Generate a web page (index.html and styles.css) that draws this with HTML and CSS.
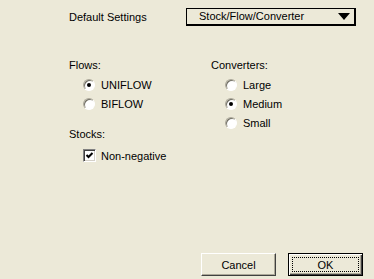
FILE: index.html
```html
<!DOCTYPE html>
<html>
  <head>
    <title>Default Settings</title>
    <link rel="stylesheet" href="styles.css">
  </head>
  <body>
    <div class="dialog">
      <div class="top">
        <span class="top-label">Default Settings</span>
        <div class="select">
          <span class="select-text">Stock/Flow/Converter</span>
          <span class="arrow"></span>
        </div>
      </div>

      <div class="groups">
        <div class="col">
          <div class="heading">Flows:</div>
          <div class="option"><span class="radio checked"></span>UNIFLOW</div>
          <div class="option"><span class="radio"></span>BIFLOW</div>

          <div class="heading stocks">Stocks:</div>
          <div class="option check-row">
            <span class="check">
              <svg width="9" height="9" viewBox="0 0 9 9">
                <polyline points="1.5,4 3.5,6 7.5,2" fill="none" stroke="#000" stroke-width="2"/>
              </svg>
            </span>Non-negative
          </div>
        </div>

        <div class="col">
          <div class="heading">Converters:</div>
          <div class="option"><span class="radio"></span>Large</div>
          <div class="option"><span class="radio checked"></span>Medium</div>
          <div class="option"><span class="radio"></span>Small</div>
        </div>
      </div>

      <div class="buttons">
        <button class="btn">Cancel</button>
        <button class="btn default"><span class="focus">OK</span></button>
      </div>
    </div>
  </body>
</html>
```

FILE: styles.css
```css
* {
  box-sizing: border-box;
}

html, body {
  margin: 0;
  padding: 0;
}

body {
  background: #ece9d8;
  font-family: "Liberation Sans", Arial, sans-serif;
  font-size: 11px;
  color: #000;
}

.dialog {
  height: 279px;
  display: flex;
  flex-direction: column;
}

/* top row */
.top {
  display: flex;
  align-items: center;
  padding: 8px 0 0 69px;
}

.top-label {
  width: 117px;
  line-height: 18px;
}

.select {
  width: 170px;
  height: 18px;
  border: 1px solid #000;
  border-right-width: 2px;
  border-bottom-width: 2px;
  display: flex;
  align-items: center;
  padding: 0 4px 0 12px;
}

.select-text {
  flex: 1;
  line-height: 15px;
}

.arrow {
  width: 0;
  height: 0;
  border-left: 6px solid transparent;
  border-right: 6px solid transparent;
  border-top: 7px solid #000;
}

/* option groups */
.groups {
  display: grid;
  grid-template-columns: 142px 1fr;
  padding-left: 69px;
  margin-top: 30px;
}

.heading {
  line-height: 19px;
}

.heading.stocks {
  margin-top: 12px;
}

.option {
  display: flex;
  align-items: center;
  height: 19px;
  padding-left: 14px;
}

.option.check-row {
  height: 21px;
  margin-top: 1px;
}

.radio {
  width: 12px;
  height: 12px;
  border-radius: 50%;
  background: #fff;
  border: 1px solid;
  border-color: #aca899 #fff #fff #aca899;
  box-shadow: inset 1px 1px 0 #716f64;
  display: flex;
  align-items: center;
  justify-content: center;
  margin-right: 6px;
}

.radio.checked::after {
  content: "";
  width: 4px;
  height: 4px;
  border-radius: 50%;
  background: #000;
}

.check {
  width: 13px;
  height: 13px;
  background: #fff;
  border: 1px solid;
  border-color: #808080 #fff #fff #808080;
  box-shadow: inset 1px 1px 0 #404040, inset -1px -1px 0 #d4d0c8;
  display: flex;
  align-items: center;
  justify-content: center;
  margin-right: 5px;
}

.check svg {
  display: block;
}

/* buttons */
.buttons {
  margin-top: auto;
  display: flex;
  justify-content: flex-end;
  gap: 12px;
  padding: 0 11px 3px 0;
}

.btn {
  width: 75px;
  height: 23px;
  padding: 0;
  font-family: "Liberation Sans", Arial, sans-serif;
  font-size: 11px;
  color: #000;
  background: #ece9d8;
  border: 1px solid;
  border-color: #fff #404040 #404040 #fff;
  box-shadow: inset -1px -1px 0 #aca899;
}

.btn.default {
  border: 1px solid #000;
  box-shadow: inset 1px 1px 0 #fff, inset -1px -1px 0 #404040, inset -2px -2px 0 #aca899;
  padding: 3px;
}

.focus {
  display: flex;
  align-items: center;
  justify-content: center;
  height: 100%;
  border: 1px dotted #000;
}
```
